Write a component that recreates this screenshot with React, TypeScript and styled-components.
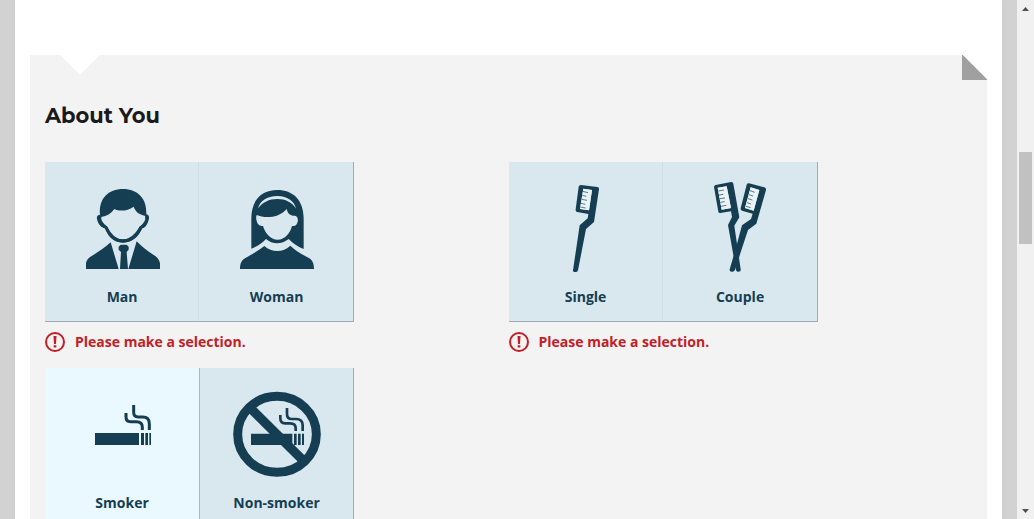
import React, { useState } from "react";
import styled, { createGlobalStyle } from "styled-components";

const ink = "#163e52";
const edge = "#9dabb2";

const GlobalStyle = createGlobalStyle`
  *, *::before, *::after { box-sizing: border-box; }
  body {
    margin: 0;
    background: #d2d2d2;
    font-family: "Open Sans", "Liberation Sans", sans-serif;
    font-size: 14px;
    line-height: 20px;
  }
`;

const Frame = styled.div`
  display: grid;
  grid-template-columns: minmax(0, 1fr) 17px;
  height: 100vh;
  overflow: hidden;
`;

const Viewport = styled.div`
  overflow: hidden;
  padding: 0 15px;
`;

const Page = styled.main`
  min-height: 100%;
  padding: 55px 15px 0;
  background: #fff;
  box-shadow: 0 0 8px rgba(0, 0, 0, 0.04);
`;

const Panel = styled.section`
  position: relative;
  padding: 46px 15px 30px;
  background: #f3f3f3;

  &::before {
    content: "";
    position: absolute;
    top: 0;
    left: 30px;
    border: 20px solid transparent;
    border-top-color: #fff;
    border-bottom: 0;
  }

  &::after {
    content: "";
    position: absolute;
    top: 0;
    right: 0;
    width: 25px;
    height: 25px;
    background: linear-gradient(45deg, #a0a0a0 50%, #fff calc(50% + 1px));
  }
`;

const Heading = styled.h2`
  margin: 0 0 31px;
  color: #1a1a1a;
  font-family: Montserrat, Inter, sans-serif;
  font-size: 21px;
  font-weight: 700;
  line-height: 30px;
`;

const Questions = styled.form`
  display: grid;
  grid-template-columns: 1fr 1fr;
`;

const Question = styled.fieldset`
  min-width: 0;
  margin: 0;
  padding: 0 0 16px;
  border: 0;
`;

const Options = styled.div`
  display: grid;
  grid-template-columns: 199fr 200fr;
  width: 66.67%;
`;

const Tile = styled.label`
  position: relative;
  display: flex;
  flex-direction: column;
  align-items: center;
  gap: 10px;
  padding: 15px 0;
  background: #d9e8ef;
  box-shadow: inset 0 -1px ${edge}, inset -1px 0 #cfdfe6;
  color: ${ink};
  font-weight: 700;
  cursor: pointer;

  &:last-child {
    box-shadow: inset -1px -1px ${edge};
  }

  &:has(input:checked) {
    background: #eaf8ff;
    box-shadow: none;
  }

  &:has(input:checked) + & {
    box-shadow: inset -1px -1px ${edge}, inset 1px 0 #a9b8bf;
  }
`;

const Radio = styled.input`
  position: absolute;
  inset: 0;
  width: 100%;
  height: 100%;
  margin: 0;
  opacity: 0;
  cursor: pointer;
`;

const Picture = styled.svg`
  display: block;
  width: 90px;
  height: 100px;
  fill: ${ink};
  fill-rule: evenodd;
`;

const ErrorMessage = styled.p`
  display: flex;
  align-items: center;
  gap: 10px;
  margin: 10px 0 0;
  color: #c32026;
  font-weight: 700;
`;

const ErrorBadge = styled.svg`
  flex: none;
  width: 20px;
  height: 20px;
`;

const ScrollBar = styled.div`
  display: flex;
  flex-direction: column;
  background: #f1f1f1;
`;

const ScrollButton = styled.button`
  display: grid;
  place-items: center;
  height: 17px;
  padding: 0;
  border: 0;
  background: transparent;
`;

const Track = styled.div`
  display: grid;
  flex: 1;
  grid-template-rows: 135fr 92fr 258fr;
  padding: 0 2px;
`;

const Thumb = styled.div`
  grid-row: 2;
  background: #c1c1c1;
`;

const ManIcon = () => (
  <Picture viewBox="111 66 270 300" aria-hidden="true">
    <path d="M180 179C176 130 205 102 249 102S321 130 319 178C328 178 329 190 325 198C320 212 315 218 307 220C296 243 280 263 249 263S204 243 195 220C183 218 175 208 172 196C169 186 171 180 180 179ZM184 186C200 184 214 176 223 162C237 169 262 169 281 155C287 172 298 178 314 182C320 188 319 196 314 204C310 212 307 211 300 214C290 236 276 253 249 253S209 235 200 214C192 211 184 209 181 200C178 190 180 187 184 186Z" />
    <path d="M212 262L236 342H138V325C140 312 150 305 160 300C178 289 196 276 212 262ZM290 259L265 342H360V325C358 312 350 305 340 299C322 288 305 275 290 259ZM242 269H260L266 275V284L260 291L264 342H240L243 291L236 284V275Z" />
    <path d="M180 185C176 197 186 208 198 217C210 242 226 258 249 258S290 240 303 217C315 208 324 197 319 184" fill="none" stroke={ink} strokeWidth="9" />
  </Picture>
);

const WomanIcon = () => (
  <Picture viewBox="111 66 270 300" aria-hidden="true">
    <path d="M169 281V190C169 135 200 105 247 105S326 135 326 190V282C310 276 292 265 281 252C260 269 232 269 213 252C200 266 184 275 169 281ZM189 160C195 138 215 123 247 123S298 140 303 160C290 142 272 132 247 132S203 142 189 160ZM185 180C205 188 245 194 275 162C278 175 284 181 295 182C308 181 310 192 308 200C305 212 299 213 291 213C285 235 270 254 248 254S211 235 204 213C195 213 188 210 185 198C183 190 183 185 185 180Z" />
    <path d="M208 273C230 293 265 293 286 272C300 287 325 300 343 310C352 316 357 325 357 342H135C135 325 140 316 150 310C170 298 192 285 208 273Z" />
  </Picture>
);

const SingleIcon = () => (
  <Picture viewBox="108 66 270 300" aria-hidden="true">
    <path d="M228 90L277 96Q283 97 282 103L267 201L243 222L219 346Q218 351 213 351H208Q203 351 204 346L224 211L248 190L250 177L217 171Q211 170 212 163L221 95Q222 90 228 90ZM235 101L261 105L252 166L225 162Z" />
    <path d="M235 101L261 105L252 166L225 162Z" fill="#eaf3f7" />
    <path d="M233 109L249 113M232 121L244 124M230 133L246 136M228 145L241 148M226 156L242 159" fill="none" stroke={ink} strokeWidth="2" />
  </Picture>
);

const CoupleIcon = () => (
  <Picture viewBox="120 66 270 300" aria-hidden="true">
    <path d="M282 85L328 97Q334 99 333 105L304 206L279 225L257 292L240 345Q237 351 230 350Q223 350 224 343L241 285L261 211L288 192L293 176L261 167Q256 165 257 160L275 89Q277 84 282 85ZM287 97L313 105L296 167L270 159Z" />
    <path d="M182 90L228 81Q234 80 235 86L253 187L238 212L257 343Q258 350 251 350Q244 351 243 345L219 210L231 186L228 169L196 174Q191 175 190 170L177 96Q177 91 182 90ZM188 98L215 94L228 159L200 164Z" />
    <path d="M287 97L313 105L296 167L270 159ZM188 98L215 94L228 159L200 164Z" fill="#eaf3f7" />
    <path d="M285 107L299 112M282 119L294 123M279 131L292 135M276 143L288 147M273 154L287 158M190 108L207 105M192 120L205 118M194 131L210 129M196 142L209 140M198 154L214 151" fill="none" stroke={ink} strokeWidth="2" />
  </Picture>
);

const SmokerIcon = () => (
  <Picture viewBox="111 69 270 300" aria-hidden="true">
    <path d="M165 219H297V255H165ZM303 219H312V255H303ZM316 219H324V255H316ZM328 219H333V255H328Z" />
    <path d="M281 135V157Q281 171 295 171H308Q328 171 328 191V210M258 159V170Q258 185 272 185H289Q307 185 307 201V210" fill="none" stroke={ink} strokeWidth="9" />
  </Picture>
);

const NonSmokerIcon = () => (
  <Picture viewBox="111 69 270 300" aria-hidden="true">
    <ellipse cx="246" cy="223" rx="118" ry="114" fill="none" stroke={ink} strokeWidth="27" />
    <path d="M172 150L320 297" fill="none" stroke={ink} strokeWidth="28" />
    <path d="M168 221H292V255H168ZM297 221H305V255H297ZM309 221H317V255H309ZM321 221H327V255H321Z" />
    <path d="M276 144V162Q276 177 290 177H303Q323 177 323 196V213M256 165V175Q256 190 270 190H285Q302 190 302 204V213" fill="none" stroke={ink} strokeWidth="8" />
  </Picture>
);

type Option = { label: string; Icon: React.ComponentType };
type QuestionData = { name: string; title: string; options: Option[]; required?: boolean };

const questions: QuestionData[] = [
  {
    name: "gender",
    title: "Gender",
    required: true,
    options: [
      { label: "Man", Icon: ManIcon },
      { label: "Woman", Icon: WomanIcon },
    ],
  },
  {
    name: "household",
    title: "Household",
    required: true,
    options: [
      { label: "Single", Icon: SingleIcon },
      { label: "Couple", Icon: CoupleIcon },
    ],
  },
  {
    name: "smoking",
    title: "Smoking",
    options: [
      { label: "Smoker", Icon: SmokerIcon },
      { label: "Non-smoker", Icon: NonSmokerIcon },
    ],
  },
];

export default function App() {
  const [answers, setAnswers] = useState<Record<string, string>>({ smoking: "Smoker" });

  return (
    <>
      <GlobalStyle />
      <Frame>
        <Viewport>
          <Page>
            <Panel>
              <Heading>About You</Heading>
              <Questions>
                {questions.map(({ name, title, options, required }) => (
                  <Question key={name} aria-label={title}>
                    <Options>
                      {options.map(({ label, Icon }) => (
                        <Tile key={label}>
                          <Radio
                            type="radio"
                            name={name}
                            value={label}
                            checked={answers[name] === label}
                            onChange={() => setAnswers({ ...answers, [name]: label })}
                          />
                          <Icon />
                          <span>{label}</span>
                        </Tile>
                      ))}
                    </Options>
                    {required && !answers[name] && (
                      <ErrorMessage role="alert">
                        <ErrorBadge viewBox="0 0 20 20" aria-hidden="true">
                          <circle cx="10" cy="10" r="9" fill="none" stroke="currentColor" strokeWidth="2" />
                          <path d="M8.5 4H11.5L11 12H9ZM8.7 13.2H11.3V15.6H8.7Z" fill="currentColor" />
                        </ErrorBadge>
                        Please make a selection.
                      </ErrorMessage>
                    )}
                  </Question>
                ))}
              </Questions>
            </Panel>
          </Page>
        </Viewport>
        <ScrollBar>
          <ScrollButton type="button" aria-label="Scroll up">
            <svg width="7" height="4" viewBox="0 0 7 4" fill="#505050" aria-hidden="true">
              <path d="M0 4L3.5 0L7 4Z" />
            </svg>
          </ScrollButton>
          <Track>
            <Thumb />
          </Track>
          <ScrollButton type="button" aria-label="Scroll down">
            <svg width="7" height="4" viewBox="0 0 7 4" fill="#505050" aria-hidden="true">
              <path d="M0 0L3.5 4L7 0Z" />
            </svg>
          </ScrollButton>
        </ScrollBar>
      </Frame>
    </>
  );
}
